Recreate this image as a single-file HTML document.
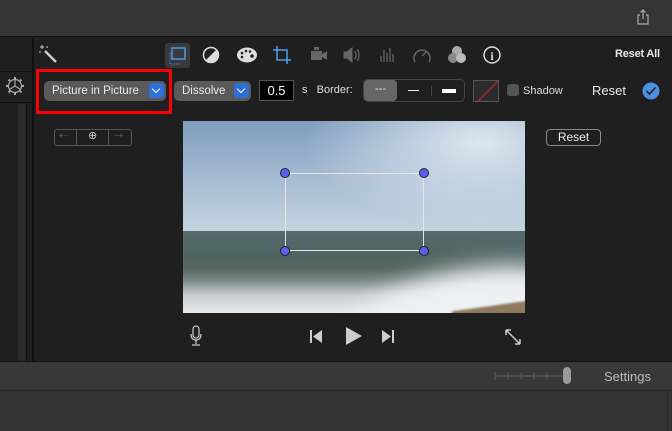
<!DOCTYPE html><html><head><style>
*{margin:0;padding:0;box-sizing:border-box}
body{width:672px;height:431px;background:#1f1f1f;position:relative;overflow:hidden;font-family:"Liberation Sans",sans-serif;color:#ddd}
.a{position:absolute}
.btn{position:absolute;background:#5a5a5a;border-radius:5px;color:#e8e8e8;font-size:11.5px;line-height:20px;padding-left:8px}
.dd{position:absolute;right:2px;top:2px;width:15px;height:15px;background:#2f6fd8;border-radius:3px}
.dd:after{content:"";position:absolute;left:4px;top:3px;width:5px;height:5px;border-right:1.5px solid #fff;border-bottom:1.5px solid #fff;transform:rotate(45deg)}
.h{position:absolute;width:10px;height:10px;background:#5b5ef0;border:1px solid #222;border-radius:50%}
</style></head><body>
<div class="a" style="left:0;top:0;width:672px;height:37px;background:#353535;border-bottom:1px solid #0e0e0e"></div>
<svg class="a" style="left:636px;top:9px" width="14" height="16" viewBox="0 0 14 16" fill="none" stroke="#aaa" stroke-width="1.2"><path d="M4 6H2v9h10V6h-2M7 10V1M4.5 3.5L7 1l2.5 2.5"/></svg>
<div class="a" style="left:0;top:38px;width:34px;height:323px;background:#1f1f1f;border-right:2px solid #111"></div>
<div class="a" style="left:0;top:71px;width:34px;height:32px;border-top:1px solid #111;border-bottom:1px solid #111"></div>
<svg class="a" style="left:5px;top:76px" width="20" height="20" viewBox="0 0 20 20" fill="none" stroke="#aaa" stroke-width="1.2"><circle cx="10" cy="10" r="6.5"/><path d="M10 10V4M10 10l-5 3M10 10l5 3"/><path d="M10 1v2M10 17v2M1 10h2M17 10h2M3.6 3.6l1.4 1.4M15 15l1.4 1.4M3.6 16.4L5 15M15 5l1.4-1.4" stroke-width="2"/></svg>
<div class="a" style="left:18px;top:104px;width:9px;height:257px;background:#2a2a2a;border-right:1px solid #111"></div>
<svg class="a" style="left:38px;top:44px" width="20" height="20" viewBox="0 0 20 20" stroke="#ccc" fill="none"><path d="M7 7l11 11" stroke-width="2.5"/><path d="M4 1v4M2 3h4M9 2v2M1 8h2" stroke-width="1"/></svg>
<div class="a" style="left:165px;top:43px;width:25px;height:25px;background:#3a3a3a;border-radius:3px"></div>
<svg class="a" style="left:167px;top:45px" width="22" height="22" viewBox="0 0 22 22" fill="none" stroke="#4b9df0"><rect x="5" y="3" width="13" height="11" stroke-width="1.4"/><path d="M3 8v11h11" stroke-dasharray="1 1.5"/></svg>
<svg class="a" style="left:202px;top:46px" width="18" height="18" viewBox="0 0 18 18"><circle cx="9" cy="9" r="7.5" fill="none" stroke="#ddd" stroke-width="1.5"/><path d="M3.7 14.3A7.5 7.5 0 0 0 14.3 3.7Z" fill="#ddd"/></svg>
<svg class="a" style="left:236px;top:46px" width="22" height="18" viewBox="0 0 22 18"><ellipse cx="11" cy="9" rx="10" ry="7.5" fill="#ddd"/><g fill="#1f1f1f"><circle cx="6" cy="7" r="1.3"/><circle cx="10" cy="5" r="1.3"/><circle cx="14" cy="5.5" r="1.3"/><circle cx="6" cy="11" r="1.3"/><circle cx="16" cy="10" r="1.8"/></g></svg>
<svg class="a" style="left:272px;top:45px" width="20" height="20" viewBox="0 0 20 20" fill="none" stroke="#4b9df0" stroke-width="1.5"><path d="M5 1v14h14M1 5h14v14"/></svg>
<svg class="a" style="left:309px;top:46px" width="20" height="18" viewBox="0 0 20 18"><rect x="2" y="5" width="11" height="9" fill="#666"/><path d="M13 8l5-3v9l-5-3z" fill="#666"/><rect x="5" y="1" width="5" height="3" fill="#666"/></svg>
<svg class="a" style="left:342px;top:46px" width="20" height="18" viewBox="0 0 20 18" fill="none" stroke="#666"><path d="M2 6h3l5-4v14l-5-4H2z" fill="#666"/><path d="M13 5q2 4 0 8M15.5 3q3 6 0 12" stroke-width="1.3"/></svg>
<svg class="a" style="left:379px;top:46px" width="16" height="18" viewBox="0 0 16 18" stroke="#666" stroke-width="1.2"><path d="M2 10v6M5 4v12M8 7v9M11 2v14M14 8v8"/></svg>
<svg class="a" style="left:412px;top:46px" width="20" height="18" viewBox="0 0 20 18" fill="none" stroke="#666" stroke-width="1.5"><path d="M3 16A8 8 0 1 1 17 16"/><path d="M10 10l4-4"/></svg>
<svg class="a" style="left:447px;top:45px" width="20" height="20" viewBox="0 0 20 20"><circle cx="10" cy="6" r="5" fill="#aaa"/><circle cx="6" cy="13" r="5" fill="#888"/><circle cx="14" cy="13" r="5" fill="#bbb"/></svg>
<svg class="a" style="left:482px;top:45px" width="20" height="20" viewBox="0 0 20 20"><circle cx="10" cy="10" r="8" fill="none" stroke="#ddd" stroke-width="1.5"/><text x="10" y="15" font-size="12" font-weight="bold" fill="#ddd" text-anchor="middle" font-family="Liberation Serif">i</text></svg>
<div class="a" style="left:615px;top:48px;font-size:11px;color:#e8e8e8;font-weight:bold;letter-spacing:-0.2px">Reset All</div>
<div class="a" style="left:36px;top:69px;width:136px;height:45px;border:3px solid #f00"></div>
<div class="btn" style="left:44px;top:81px;width:122px;height:20px">Picture in Picture<div class="dd"></div></div>
<div class="btn" style="left:174px;top:81px;width:77px;height:20px">Dissolve<div class="dd"></div></div>
<div class="a" style="left:259px;top:80px;width:35px;height:21px;background:#000;border:1px solid #555;color:#fff;font-size:13px;line-height:19px;text-align:center">0.5</div>
<div class="a" style="left:302px;top:84px;font-size:11px;color:#ddd">s&nbsp;&nbsp; Border:</div>
<div class="a" style="left:363px;top:79px;width:102px;height:23px;border:1px solid #444;border-radius:5px;background:#1f1f1f"></div>
<div class="a" style="left:364px;top:80px;width:33px;height:21px;background:#666;border-radius:4px;color:#eee;font-size:11px;text-align:center;line-height:19px">---</div>
<div class="a" style="left:408px;top:90px;width:11px;height:1px;background:#eee"></div>
<div class="a" style="left:431px;top:86px;width:1px;height:10px;background:#444"></div>
<div class="a" style="left:442px;top:89px;width:14px;height:4px;background:#fff"></div>
<div class="a" style="left:473px;top:80px;width:26px;height:22px;border:1px solid #555;background:#2c2c2c;overflow:hidden"><div style="position:absolute;left:12px;top:-4px;width:1.5px;height:30px;background:#8a2a2a;transform:rotate(45deg)"></div></div>
<div class="a" style="left:507px;top:84px;width:12px;height:12px;background:#555;border-radius:3px"></div>
<div class="a" style="left:523px;top:85px;font-size:11px;color:#ddd">Shadow</div>
<div class="a" style="left:592px;top:83px;font-size:13px;color:#e8e8e8">Reset</div>
<svg class="a" style="left:641px;top:81px" width="20" height="20" viewBox="0 0 20 20"><circle cx="10" cy="10" r="8.5" fill="#4a90e2"/><path d="M5.5 10l3 3 6-6.5" fill="none" stroke="#1f1f1f" stroke-width="1.6"/></svg>
<div class="a" style="left:54px;top:129px;width:78px;height:17px;border:1px solid #555;border-radius:3px"></div>
<div class="a" style="left:76px;top:130px;width:1px;height:15px;background:#555"></div>
<div class="a" style="left:108px;top:130px;width:1px;height:15px;background:#555"></div>
<div class="a" style="left:59px;top:129px;font-size:11px;color:#555">⇠</div>
<div class="a" style="left:88px;top:129px;font-size:11px;color:#ccc">⊕</div>
<div class="a" style="left:114px;top:129px;font-size:11px;color:#555">⇢</div>
<div class="a" style="left:546px;top:129px;width:55px;height:17px;border:1px solid #888;border-radius:4px;font-size:12px;color:#eee;text-align:center;line-height:15px">Reset</div>
<div class="a" style="left:183px;top:121px;width:342px;height:192px;overflow:hidden;background:linear-gradient(to bottom,#7f9dbf 0%,#a6bcd2 30%,#c2d2df 57%)">
<div class="a" style="left:120px;top:0;width:222px;height:110px;background:radial-gradient(ellipse at 80% 20%,#dde7f0 0%,rgba(220,230,240,0) 70%)"></div>
<div class="a" style="left:0;top:110px;width:342px;height:82px;background:linear-gradient(to bottom,#56696c 0%,#4e6462 30%,#56675e 45%,#7a8888 60%,#c6cdd1 78%,#e8ebee 100%)"></div>
<div class="a" style="left:170px;top:150px;width:220px;height:80px;background:#eef1f4;border-radius:50%;filter:blur(12px);transform:rotate(-12deg)"></div>
<div class="a" style="left:270px;top:184px;width:90px;height:24px;background:#8f7a5e;transform:rotate(-8deg);filter:blur(1px)"></div>
</div>
<div class="a" style="left:285px;top:173px;width:139px;height:78px;border:1.5px solid #e5e5e5"></div>
<div class="h" style="left:280px;top:168px"></div>
<div class="h" style="left:419px;top:168px"></div>
<div class="h" style="left:280px;top:246px"></div>
<div class="h" style="left:419px;top:246px"></div>
<svg class="a" style="left:189px;top:325px" width="14" height="22" viewBox="0 0 14 22" fill="none" stroke="#ccc" stroke-width="1.2"><rect x="4" y="1" width="6" height="12" rx="3"/><path d="M2 9q0 6 5 6q5 0 5-6M7 15v4M3 20h8"/></svg>
<svg class="a" style="left:309px;top:329px" width="14" height="15" viewBox="0 0 14 15" fill="#ccc"><rect x="1" y="1" width="2" height="13"/><path d="M13 1v13L4 7.5z"/></svg>
<svg class="a" style="left:343px;top:325px" width="22" height="22" viewBox="0 0 22 22" fill="#ccc"><path d="M3 2v18l16-9z"/></svg>
<svg class="a" style="left:381px;top:329px" width="14" height="15" viewBox="0 0 14 15" fill="#ccc"><rect x="11" y="1" width="2" height="13"/><path d="M1 1v13l9-6.5z"/></svg>
<svg class="a" style="left:503px;top:327px" width="20" height="20" viewBox="0 0 20 20" fill="none" stroke="#ccc" stroke-width="1.5"><path d="M3 3l14 14M3 3v5M3 3h5M17 17v-5M17 17h-5"/></svg>
<div class="a" style="left:0;top:361px;width:672px;height:70px;background:#333;border-top:1px solid #111"></div>
<div class="a" style="left:0;top:362px;width:672px;height:29px;background:#383838;border-bottom:1px solid #2a2a2a"></div>
<svg class="a" style="left:494px;top:369px" width="80" height="16" viewBox="0 0 80 16" stroke="#5a5a5a" stroke-width="1.3"><path d="M1 7h70M1 3v8M14 4v6M27 4v6M40 4v6M53 4v6M70 3v8"/></svg>
<div class="a" style="left:563px;top:367px;width:8px;height:17px;background:#9a9a9a;border-radius:4px"></div>
<div class="a" style="left:604px;top:369px;font-size:13px;color:#bbb">Settings</div>
<div class="a" style="left:667px;top:392px;width:1px;height:39px;background:#2a2a2a"></div>
</body></html>
